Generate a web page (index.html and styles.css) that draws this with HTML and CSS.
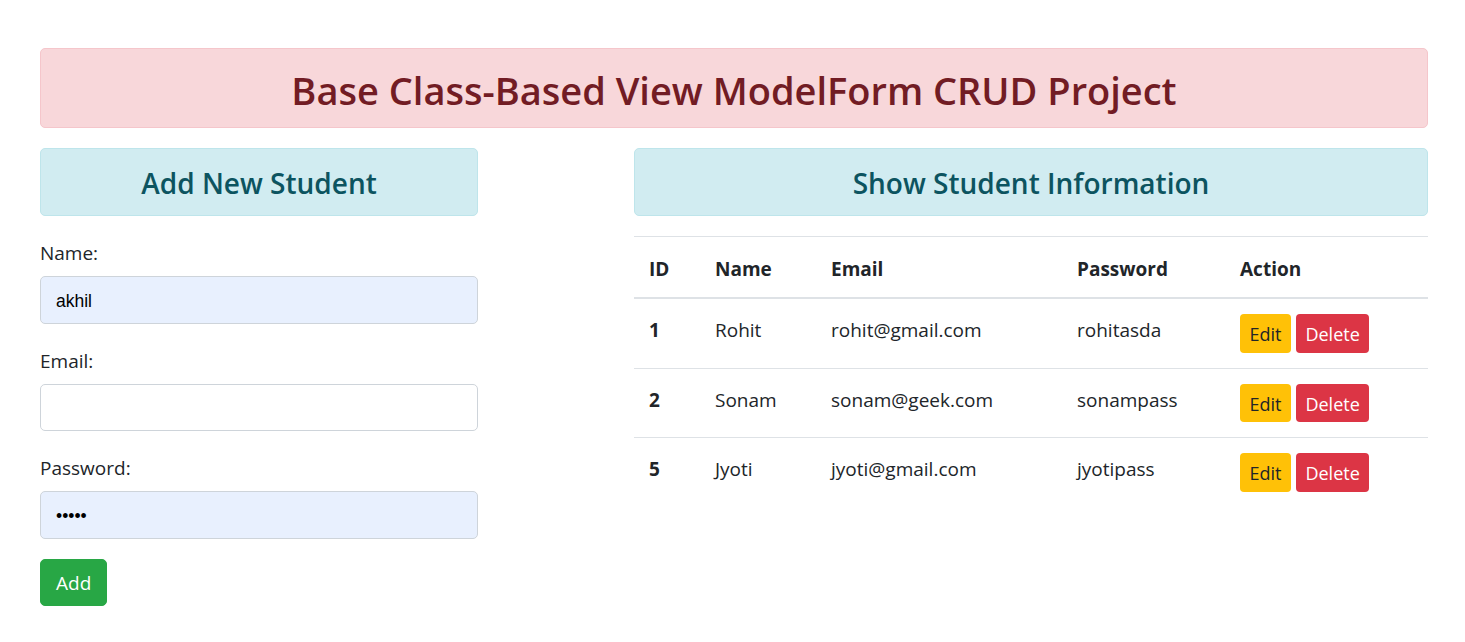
FILE: index.html
```html
<!DOCTYPE html>
<html lang="en">
<head>
<meta charset="utf-8">
<title>Base Class-Based View ModelForm CRUD Project</title>
<link rel="stylesheet" href="styles.css">
</head>
<body>
<div class="container">
  <div class="alert alert-danger"><h2 class="title">Base Class-Based View ModelForm CRUD Project</h2></div>
  <div class="row">
    <div class="col-left">
      <div class="alert alert-info"><h4 class="subtitle">Add New Student</h4></div>
      <form class="form">
        <div class="form-group">
          <label class="label" for="name">Name:</label>
          <input class="form-control autofill" id="name" type="text" value="akhil">
        </div>
        <div class="form-group">
          <label class="label" for="email">Email:</label>
          <input class="form-control" id="email" type="email" value="">
        </div>
        <div class="form-group">
          <label class="label" for="password">Password:</label>
          <input class="form-control autofill" id="password" type="password" value="akhil">
        </div>
        <button type="button" class="btn btn-success">Add</button>
      </form>
    </div>
    <div class="col-right">
      <div class="alert alert-info"><h4 class="subtitle">Show Student Information</h4></div>
      <table class="table">
        <colgroup>
          <col class="c-id"><col class="c-name"><col class="c-email"><col class="c-pass"><col class="c-action">
        </colgroup>
        <thead>
          <tr><th>ID</th><th>Name</th><th>Email</th><th>Password</th><th>Action</th></tr>
        </thead>
        <tbody>
          <tr>
            <th>1</th><td>Rohit</td><td>rohit@gmail.com</td><td>rohitasda</td>
            <td class="actions"><span class="btn-sm btn-warning">Edit</span> <span class="btn-sm btn-danger">Delete</span></td>
          </tr>
          <tr>
            <th>2</th><td>Sonam</td><td>sonam@geek.com</td><td>sonampass</td>
            <td class="actions"><span class="btn-sm btn-warning">Edit</span> <span class="btn-sm btn-danger">Delete</span></td>
          </tr>
          <tr>
            <th>5</th><td>Jyoti</td><td>jyoti@gmail.com</td><td>jyotipass</td>
            <td class="actions"><span class="btn-sm btn-warning">Edit</span> <span class="btn-sm btn-danger">Delete</span></td>
          </tr>
        </tbody>
      </table>
    </div>
  </div>
</div>
</body>
</html>
```

FILE: styles.css
```css
* { box-sizing: border-box; }

body {
  margin: 0;
  background: #fff;
  color: #212529;
  font-family: "Open Sans", "Noto Sans", sans-serif;
  font-size: 19px;
  line-height: 30px;
}

.container {
  width: 1428px;
  padding: 48px 0 0 40px;
}

.alert {
  border: 1px solid transparent;
  border-radius: 5px;
  text-align: center;
  margin-bottom: 20px;
}

.alert-danger {
  background: #f8d7da;
  border-color: #f5c6cb;
  color: #721c24;
  padding: 17px 20px 13px;
}

.alert-info {
  background: #d1ecf1;
  border-color: #bee5eb;
  color: #0c5460;
  padding: 17px 20px 13.5px;
}

.title {
  margin: 0;
  font-size: 38px;
  font-weight: 600;
  line-height: 48px;
}

.subtitle {
  margin: 0;
  font-size: 28px;
  font-weight: 600;
  line-height: 35.5px;
}

.row {
  display: grid;
  grid-template-columns: 438px 794px;
  column-gap: 156px;
  align-items: start;
}

.form-group {
  margin-bottom: 20px;
}

.label {
  display: block;
  padding-top: 2px;
  height: 30px;
  margin-bottom: 10px;
  line-height: 30px;
}

.form-control {
  display: block;
  width: 100%;
  height: 47.5px;
  padding: 3px 15px 0;
  border: 1px solid #ced4da;
  border-radius: 5px;
  background: #fff;
  color: #000;
  font-family: "Liberation Sans", Arial, sans-serif;
  font-size: 17.5px;
  outline: none;
}

.autofill {
  background: #e8f0fe;
}

.btn {
  display: inline-block;
  height: 47.5px;
  padding: 2px 15px 0;
  border: 1px solid transparent;
  border-radius: 5px;
  font-family: inherit;
  font-size: 19px;
  line-height: 30px;
  cursor: pointer;
}

.btn-success {
  background: #28a745;
  border-color: #28a745;
  color: #fff;
}

.table {
  width: 794px;
  border-collapse: collapse;
  table-layout: fixed;
}

.c-id { width: 66px; }
.c-name { width: 116px; }
.c-email { width: 246px; }
.c-pass { width: 163px; }
.c-action { width: 203px; }

.table th,
.table td {
  text-align: left;
  vertical-align: top;
  padding: 16px 15px 14px;
  border-top: 1px solid #dee2e6;
  line-height: 30px;
  white-space: nowrap;
}

.table th {
  font-weight: 700;
}

.table thead th {
  border-top: 1px solid #dee2e6;
  border-bottom: 2.5px solid #dee2e6;
  padding-top: 17px;
  padding-bottom: 13px;
}

.table tbody td.actions {
  padding-top: 15px;
  padding-bottom: 15px;
}

.btn-sm {
  display: inline-block;
  height: 38.5px;
  padding: 1px 9.5px 0;
  border-radius: 4px;
  font-size: 18px;
  line-height: 38px;
  vertical-align: top;
}

.btn-warning {
  background: #ffc107;
  color: #212529;
}

.btn-danger {
  background: #dc3545;
  color: #fff;
}
```
